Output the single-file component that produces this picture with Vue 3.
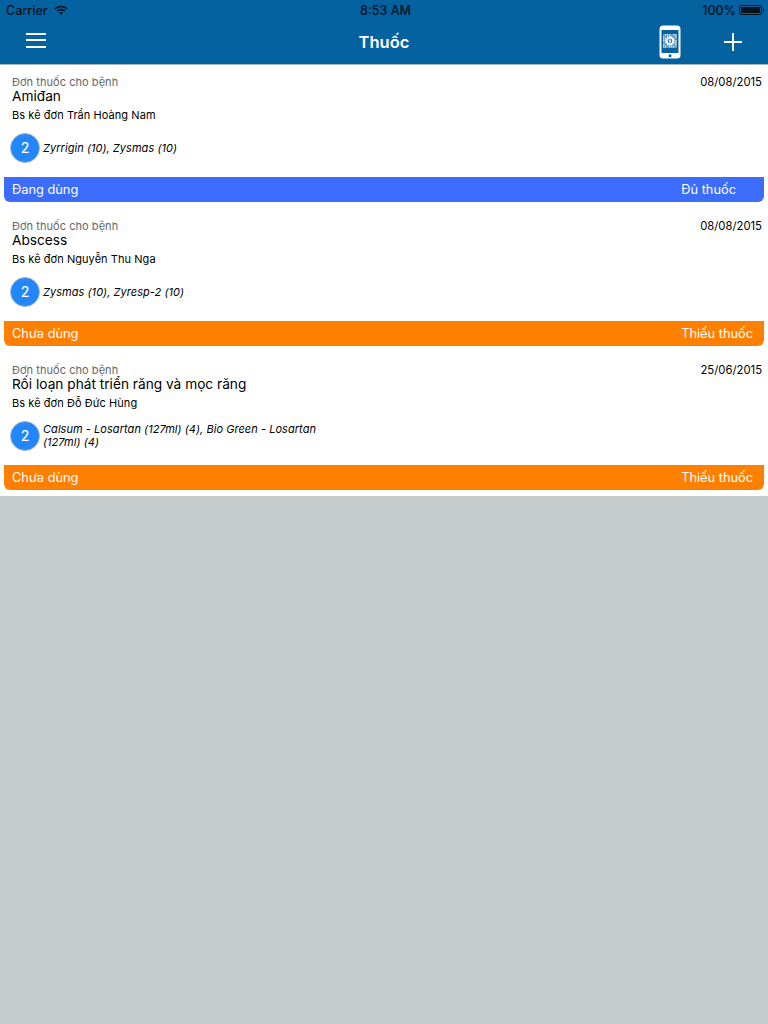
<script setup>
const prescriptions = [
  { date: '08/08/2015', name: 'Amiđan', doctor: 'Trần Hoàng Nam', count: 2, drugs: 'Zyrrigin (10), Zysmas (10)', status: 'Đang dùng', stock: 'Đủ thuốc', using: true },
  { date: '08/08/2015', name: 'Abscess', doctor: 'Nguyễn Thu Nga', count: 2, drugs: 'Zysmas (10), Zyresp-2 (10)', status: 'Chưa dùng', stock: 'Thiếu thuốc', using: false },
  { date: '25/06/2015', name: 'Rối loạn phát triển răng và mọc răng', doctor: 'Đỗ Đức Hùng', count: 2, drugs: 'Calsum - Losartan (127ml) (4), Bio Green - Losartan (127ml) (4)', status: 'Chưa dùng', stock: 'Thiếu thuốc', using: false },
]

// speckled squares round the badge of the phone icon
const dots = []
for (let row = 0; row < 7; row++) {
  for (let col = 0; col < 7; col++) {
    if ((row * 3 + col * 5) % 4 !== 0) dots.push({ x: 4 + col * 2, y: 9 + row * 2 })
  }
}
</script>

<template>
  <div class="page">
    <header class="header">
      <div class="status">
        <div class="status-left">
          <span>Carrier</span>
          <svg class="wifi" width="14" height="10" viewBox="0 0 14 10">
            <path d="M0.5 3.2C4.2 -0.2 9.8 -0.2 13.5 3.2L12.4 4.4C9.3 1.6 4.7 1.6 1.6 4.4Z" />
            <path d="M2.8 5.5C5.2 3.3 8.8 3.3 11.2 5.5L10.1 6.7C8.3 5.1 5.7 5.1 3.9 6.7Z" />
            <path d="M5 7.7C6.2 6.7 7.8 6.7 9 7.7L7 9.9Z" />
          </svg>
        </div>
        <span class="clock">8:53 AM</span>
        <div class="status-right">
          <span>100%</span>
          <span class="battery"><i></i></span>
        </div>
      </div>
      <nav class="nav">
        <button class="menu" type="button"><i></i><i></i><i></i></button>
        <h1 class="title">Thuốc</h1>
        <div class="actions">
          <svg class="phone" width="22" height="34" viewBox="0 0 22 34">
            <rect x="0.5" y="0.5" width="21" height="33" rx="3.5" fill="#fff" />
            <rect x="2.5" y="5" width="17" height="23" fill="#03629f" />
            <rect x="4" y="9" width="14" height="14" fill="#5f9cc4" />
            <rect v-for="(d, i) in dots" :key="i" :x="d.x" :y="d.y" width="1.4" height="1.4" fill="#d5e5f0" />
            <circle cx="11" cy="16" r="4.2" fill="#fff" />
            <circle cx="11" cy="16" r="2.4" fill="#2f7bb0" />
            <rect x="10.2" y="14.4" width="1.6" height="3.2" fill="#fff" />
            <circle cx="11" cy="30.8" r="1.5" fill="#03629f" />
          </svg>
          <svg class="plus" width="18" height="18" viewBox="0 0 18 18">
            <path d="M9 0V18M0 9H18" stroke="#fff" stroke-width="2" />
          </svg>
        </div>
      </nav>
    </header>

    <main class="list">
      <article v-for="item in prescriptions" :key="item.name" class="card">
        <div class="card-body">
          <div class="card-top">
            <span class="label">Đơn thuốc cho bệnh</span>
            <span class="date">{{ item.date }}</span>
          </div>
          <div class="name">{{ item.name }}</div>
          <div class="doctor">Bs kê đơn {{ item.doctor }}</div>
          <div class="drugs">
            <span class="count">{{ item.count }}</span>
            <span class="drug-text">{{ item.drugs }}</span>
          </div>
        </div>
        <div :class="['banner', item.using ? 'banner--using' : 'banner--unused']">
          <span>{{ item.status }}</span>
          <span class="stock">{{ item.stock }}</span>
        </div>
      </article>
    </main>
  </div>
</template>

<style>
html, body {
  margin: 0;
  background: #c6cccb;
}
</style>

<style scoped>
.page {
  width: 768px;
  min-height: 1024px;
  background: #c6cccb;
  font-family: Inter, "Liberation Sans", sans-serif;
  color: #000;
}

/* HEADER */
.header {
  height: 64px;
  background: #03629f;
  border-bottom: 1px solid #a9b4bb;
}
.status {
  height: 20px;
  padding: 0 5px 0 6px;
  display: grid;
  grid-template-columns: 1fr auto 1fr;
  align-items: center;
  font-size: 12.5px;
  font-weight: 500;
  color: #04121e;
}
.status-left {
  display: flex;
  align-items: center;
  gap: 6px;
}
.wifi {
  fill: #04121e;
}
.status-right {
  display: flex;
  justify-content: flex-end;
  align-items: center;
  gap: 3px;
}
.clock {
  padding-left: 2px;
}
.battery {
  width: 23px;
  height: 10px;
  margin-right: 1px;
  border: 1px solid #04121e;
  border-radius: 2px;
  padding: 1px;
  box-sizing: border-box;
  position: relative;
  display: flex;
}
.battery i {
  flex: 1;
  background: #04121e;
}
.battery::after {
  content: "";
  position: absolute;
  right: -3px;
  top: 2px;
  width: 1px;
  height: 4px;
  background: #04121e;
}
.nav {
  height: 44px;
  position: relative;
  display: flex;
  align-items: center;
  justify-content: space-between;
  padding: 0 26px;
}
.menu {
  width: 20px;
  height: 15px;
  padding: 0;
  margin-bottom: 4px;
  border: 0;
  background: none;
  display: flex;
  flex-direction: column;
  justify-content: space-between;
}
.menu i {
  height: 2px;
  background: #fff;
}
.title {
  position: absolute;
  left: 0;
  right: 0;
  margin: 0;
  text-align: center;
  font-size: 16.5px;
  font-weight: 600;
  color: #fff;
}
.actions {
  display: flex;
  align-items: center;
  gap: 43px;
}

/* LIST */
.list {
  background: #fff;
  padding-bottom: 6px;
}
.card {
  height: 144px;
  padding: 0 4px 7px;
  box-sizing: border-box;
  display: flex;
  flex-direction: column;
}
.card:last-child {
  height: 137px;
  padding-bottom: 0;
}
.card-body {
  flex: 1;
  padding: 10px 2px 0 8px;
}
.card-top {
  display: flex;
  justify-content: space-between;
  height: 14px;
  font-size: 11px;
  line-height: 14px;
  letter-spacing: 0.05px;
}
.label {
  color: #666;
}
.date {
  font-size: 11.3px;
  letter-spacing: 0;
}
.name {
  margin-top: -1px;
  font-size: 13.7px;
  line-height: 16px;
}
.doctor {
  margin-top: 3px;
  font-size: 11px;
  line-height: 16px;
  letter-spacing: 0.06px;
}
.drugs {
  margin: 10px 0 0 -2px;
  display: flex;
  align-items: center;
}
.count {
  width: 28px;
  height: 28px;
  flex: none;
  border-radius: 50%;
  border: 1px solid #a7b7c4;
  background: #2187fb;
  color: #fff;
  font-size: 14px;
  font-weight: 500;
  line-height: 28px;
  text-align: center;
}
.drug-text {
  width: 280px;
  margin-left: 3px;
  font-size: 11px;
  line-height: 13px;
  font-style: italic;
  letter-spacing: 0.05px;
}
.banner {
  height: 25px;
  flex: none;
  padding: 0 11px 1px 8px;
  box-sizing: border-box;
  display: flex;
  align-items: center;
  justify-content: space-between;
  border-radius: 0 0 6px 6px;
  font-size: 12.8px;
  color: #fff;
}
.banner--using {
  background: #3c6cfb;
}
.banner--unused {
  background: #ff8000;
}
.banner--using .stock {
  margin-right: 17px;
}
</style>
